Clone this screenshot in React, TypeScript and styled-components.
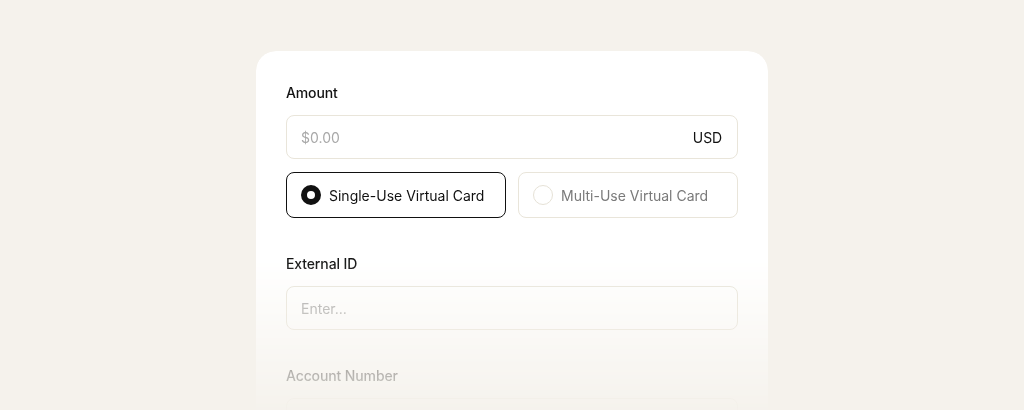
import React, { useState } from 'react';
import styled, { createGlobalStyle } from 'styled-components';

const GlobalStyle = createGlobalStyle`
  html, body {
    margin: 0;
    padding: 0;
    height: 100%;
    overflow: hidden;
    background: #f5f2ec;
  }
  body {
    font-family: Inter, 'Noto Sans', 'Liberation Sans', sans-serif;
    letter-spacing: -0.12px;
    color: #111;
    -webkit-font-smoothing: antialiased;
  }
`;

type CardType = 'single' | 'multi';

export default function App() {
  const [cardType, setCardType] = useState<CardType>('single');

  return (
    <>
      <GlobalStyle />
      <Page>
        <Card>
          <Field>
            <Label>Amount</Label>
            <InputBox>
              <Input placeholder="$0.00" />
              <Suffix>USD</Suffix>
            </InputBox>
            <Options>
              <Option $selected={cardType === 'single'} onClick={() => setCardType('single')}>
                <Dot $selected={cardType === 'single'} />
                Single-Use Virtual Card
              </Option>
              <Option $selected={cardType === 'multi'} onClick={() => setCardType('multi')}>
                <Dot $selected={cardType === 'multi'} />
                Multi-Use Virtual Card
              </Option>
            </Options>
          </Field>

          <Field>
            <Label>External ID</Label>
            <InputBox>
              <Input placeholder="Enter..." />
            </InputBox>
          </Field>

          <Field>
            <Label>Account Number</Label>
            <InputBox>
              <Input placeholder="Enter..." />
            </InputBox>
          </Field>
        </Card>
      </Page>
    </>
  );
}

const Page = styled.div`
  height: 410px;
  overflow: hidden;
  display: flex;
  justify-content: center;
  padding-top: 51px;
  box-sizing: border-box;
`;

const Card = styled.div`
  width: 512px;
  box-sizing: border-box;
  padding: 32px 30px 40px;
  background: #fff;
  border-radius: 20px;
  display: flex;
  flex-direction: column;
  gap: 36px;
  align-self: flex-start;
  /* the form fades into the page towards the bottom */
  -webkit-mask-image: linear-gradient(to bottom, #000 205px, rgba(0, 0, 0, 0.05) 360px);
  mask-image: linear-gradient(to bottom, #000 205px, rgba(0, 0, 0, 0.05) 360px);
`;

const Field = styled.div`
  display: flex;
  flex-direction: column;
  gap: 12px;
`;

const Label = styled.label`
  font-size: 14px;
  line-height: 20px;
  font-weight: 500;
  color: #111;
`;

const InputBox = styled.div`
  height: 44px;
  box-sizing: border-box;
  border: 1px solid #e9e5da;
  border-radius: 8px;
  display: flex;
  align-items: center;
  padding: 0 15px 0 14px;
`;

const Input = styled.input`
  flex: 1;
  border: none;
  outline: none;
  background: transparent;
  font: inherit;
  font-size: 14px;
  color: #111;
  padding: 0;

  &::placeholder {
    color: #a8a8a8;
  }
`;

const Suffix = styled.span`
  font-size: 14px;
  color: #111;
`;

const Options = styled.div`
  display: grid;
  grid-template-columns: 1fr 1fr;
  gap: 12px;
  margin-top: 1px;
`;

const Option = styled.button<{ $selected: boolean }>`
  height: 46px;
  box-sizing: border-box;
  display: flex;
  align-items: center;
  gap: 8px;
  padding: 0 14px;
  background: #fff;
  border-radius: 8px;
  border: ${({ $selected }) => ($selected ? '1.5px solid #111' : '1.5px solid #e9e5da')};
  font: inherit;
  font-size: 14px;
  color: ${({ $selected }) => ($selected ? '#111' : '#7a7a7a')};
  cursor: pointer;
  text-align: left;
`;

const Dot = styled.span<{ $selected: boolean }>`
  width: 20px;
  height: 20px;
  box-sizing: border-box;
  border-radius: 50%;
  flex-shrink: 0;
  background: #fff;
  border: ${({ $selected }) => ($selected ? '6.5px solid #111' : '1.5px solid #e6e2d7')};
`;
